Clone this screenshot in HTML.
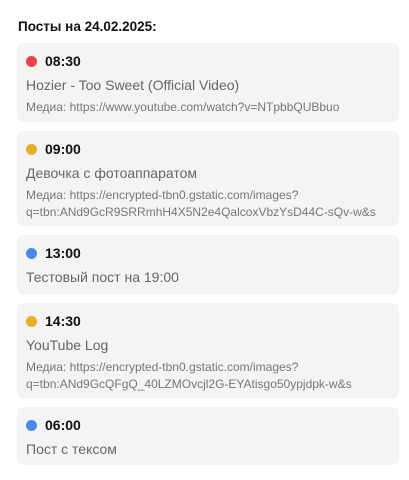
<!DOCTYPE html><html><head><style>
body{margin:0;background:#fff;font-family:"Liberation Sans",sans-serif;}
h1{position:absolute;left:18px;top:19px;margin:0;font-size:13.5px;font-weight:bold;color:#111;}
.c{position:absolute;left:17px;width:382px;background:#f4f4f2;border-radius:6px;}
.t{position:absolute;left:9px;top:10px;font-weight:bold;font-size:14px;color:#111;line-height:16px;}
.t i{display:inline-block;width:11px;height:11px;border-radius:50%;margin-right:8px;vertical-align:-1px;}
.n{position:absolute;left:9px;top:34px;font-size:14px;color:#666;line-height:16px;}
.m{position:absolute;left:9px;top:56px;font-size:12px;color:#777;line-height:17px;width:375px;}
</style></head><body>
<h1>Посты на 24.02.2025:</h1>
<div class="c" style="top:43px;height:79px"><div class="t"><i style="background:#e8434a"></i>08:30</div><div class="n">Hozier - Too Sweet (Official Video)</div><div class="m">Медиа: https://www.youtube.com/watch?v=NTpbbQUBbuo</div></div>
<div class="c" style="top:131px;height:95px"><div class="t"><i style="background:#e6af2a"></i>09:00</div><div class="n">Девочка с фотоаппаратом</div><div class="m">Медиа: https://encrypted-tbn0.gstatic.com/images?<br>q=tbn:ANd9GcR9SRRmhH4X5N2e4QalcoxVbzYsD44C-sQv-w&amp;s</div></div>
<div class="c" style="top:235px;height:59px"><div class="t"><i style="background:#4a8af0"></i>13:00</div><div class="n">Тестовый пост на 19:00</div></div>
<div class="c" style="top:303px;height:95px"><div class="t"><i style="background:#e6af2a"></i>14:30</div><div class="n">YouTube Log</div><div class="m">Медиа: https://encrypted-tbn0.gstatic.com/images?<br>q=tbn:ANd9GcQFgQ_40LZMOvcjl2G-EYAtisgo50ypjdpk-w&amp;s</div></div>
<div class="c" style="top:407px;height:58px"><div class="t"><i style="background:#4a8af0"></i>06:00</div><div class="n">Пост с тексом</div></div>
</body></html>
